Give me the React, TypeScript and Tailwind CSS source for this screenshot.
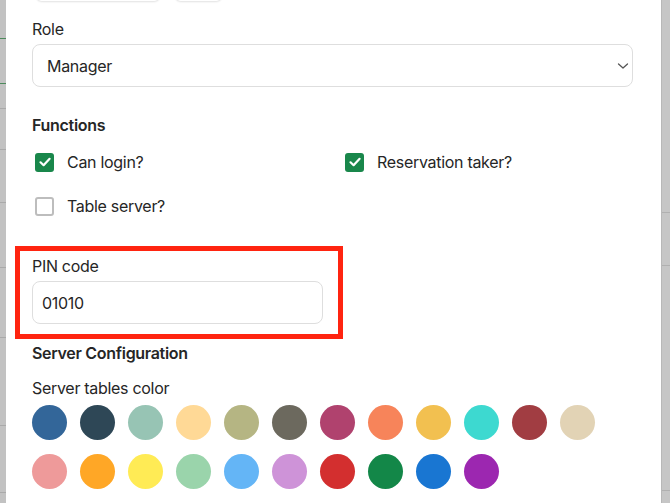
import { useState } from "react"

const rowOne = ['#336699', '#2e4756', '#97c4b4', '#ffd996', '#b5b583', '#6c695e', '#b0426e', '#f7845a', '#f2c050', '#3dd9d0', '#a13d42', '#e2d3b5']
const rowTwo = ['#ee9a9a', '#ffa726', '#ffeb55', '#9ad4ab', '#64b5f6', '#ce93d8', '#d32f2f', '#138748', '#1976d2', '#9c27b0']

type CheckProps = {
  label: string,
  checked: boolean,
  onToggle: () => void
}

function Check({ label, checked, onToggle }: CheckProps) {
  return (
    <label className="flex items-center h-[22px] cursor-pointer" onClick={onToggle}>
      <span
        className={checked
          ? "ml-[3px] w-[19px] h-[19px] rounded-[3px] bg-[#19874b] flex items-center justify-center"
          : "ml-[3px] w-[19px] h-[19px] rounded-[3px] border-2 border-[#bdbdbd] bg-white"}
      >
        {checked && (
          <svg width="14" height="14" viewBox="0 0 14 14" fill="none">
            <path d="M2.5 7.3 5.6 10.2 11.6 3.8" stroke="white" strokeWidth="2.2" strokeLinecap="round" strokeLinejoin="round" />
          </svg>
        )}
      </span>
      <span className="ml-[13px] text-[16px] text-[#262626]">{label}</span>
    </label>
  )
}

export default function App() {
  const [functions, setFunctions] = useState({ login: true, reservation: true, table: false })
  const [pin, setPin] = useState('01010')
  const [color, setColor] = useState('')

  const toggle = (key: 'login' | 'reservation' | 'table') => {
    setFunctions({ ...functions, [key]: !functions[key] })
  }

  return (
    <div className="w-[670px] h-[503px] overflow-hidden flex bg-[#c6c6c6] font-['Inter',sans-serif] tracking-[-0.3px]">
      {/* backdrop strip: dimmed page behind modal */}
      <div className="w-[6px] shrink-0 flex flex-col bg-[#c2c2c2]">
        <div className="h-[38px]" />
        <div className="h-px bg-[#4d8a5c]" />
        <div className="h-[44px]" />
        <div className="h-px bg-[#4d8a5c]" />
        <div className="h-[24px]" />
        <div className="h-px bg-[#aaaaaa]" />
        <div className="h-[40px]" />
        <div className="h-px bg-[#aaaaaa]" />
        <div className="h-[52px]" />
        <div className="h-px bg-[#aaaaaa]" />
        <div className="h-[64px]" />
        <div className="h-px bg-[#aaaaaa]" />
        <div className="h-[69px]" />
        <div className="h-px bg-[#aaaaaa]" />
        <div className="h-[87px]" />
        <div className="h-px bg-[#aaaaaa]" />
        <div className="h-[66px]" />
        <div className="h-px bg-[#aaaaaa]" />
      </div>

      <div className="w-[655px] shrink-0 bg-white relative">
        <div className="flex gap-[15px] pl-[30px] -mt-[36px]">
          <div className="w-[124px] h-[37px] rounded-md bg-white shadow-[0_1px_2px_rgba(0,0,0,0.12)]" />
          <div className="w-[47px] h-[37px] rounded-md bg-white shadow-[0_1px_2px_rgba(0,0,0,0.12)]" />
        </div>

        <div className="pl-[26px] pr-[28px] text-[#262626]">
          <div className="mt-[17px] text-[16px] leading-[22px]">Role</div>
          <div className="mt-[4px] h-[43px] rounded-[8px] border border-[#dedede] flex items-center justify-between pl-[14px] pr-[3px]">
            <span className="text-[16px]">Manager</span>
            <svg width="12" height="8" viewBox="0 0 12 8" fill="none">
              <path d="M1.5 2 6 6 10.5 2" stroke="#555" strokeWidth="1.3" strokeLinecap="round" strokeLinejoin="round" />
            </svg>
          </div>

          <div className="mt-[27px] text-[16px] leading-[22px] font-semibold">Functions</div>
          <div className="mt-[15px] grid grid-cols-[310px_1fr] gap-y-[22px]">
            <Check label="Can login?" checked={functions.login} onToggle={() => toggle('login')} />
            <Check label="Reservation taker?" checked={functions.reservation} onToggle={() => toggle('reservation')} />
            <Check label="Table server?" checked={functions.table} onToggle={() => toggle('table')} />
          </div>

          <div className="mt-[38px] text-[16px] leading-[22px]">PIN code</div>
          <input
            className="mt-[4px] block w-[291px] h-[43px] rounded-[8px] border border-[#dedede] px-[9px] text-[16px] text-[#262626] outline-none"
            value={pin}
            onChange={e => setPin(e.target.value)}
          />

          <div className="mt-[18px] text-[16px] leading-[22px] font-semibold">Server Configuration</div>
          <div className="mt-[13px] text-[16px] leading-[22px]">Server tables color</div>
          <div className="mt-[6px] flex flex-col gap-[14px]">
            {[rowOne, rowTwo].map((row, i) => (
              <div key={i} className="flex gap-[13px]">
                {row.map(c => (
                  <button
                    key={c}
                    className="w-[35px] h-[35px] rounded-full"
                    style={{ backgroundColor: c, outline: color === c ? '2px solid #333' : 'none' }}
                    onClick={() => setColor(c)}
                  />
                ))}
              </div>
            ))}
          </div>
        </div>

        {/* annotation box over the PIN field */}
        <div className="absolute left-[9px] top-[246px] w-[328px] h-[93px] border-[5px] border-[#ff2410] pointer-events-none" />
      </div>

      <div className="flex-1 flex flex-col bg-[#c6c6c6] border-l border-[#b8b8b8]">
        <div className="h-[212px]" />
        <div className="h-px bg-[#b0b0b0]" />
        <div className="h-[52px]" />
        <div className="h-px bg-[#b0b0b0]" />
        <div className="h-[224px]" />
        <div className="h-px bg-[#b0b0b0]" />
      </div>
    </div>
  )
}
